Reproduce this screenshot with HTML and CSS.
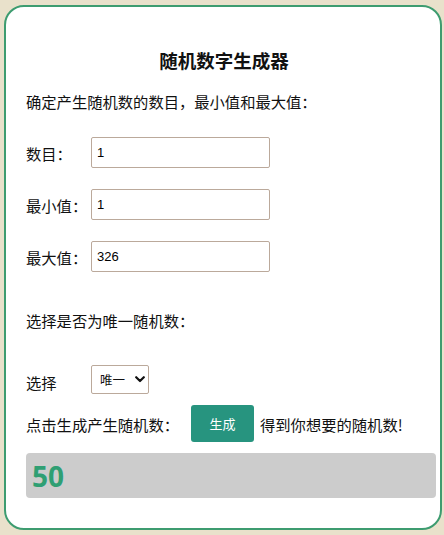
FILE: index.html
```html
<!DOCTYPE html>
<html lang="zh">
<head>
<meta charset="utf-8">
<title>随机数字生成器</title>
<link rel="stylesheet" href="styles.css">
</head>
<body>
<div class="card">
  <h1 class="title">随机数字生成器</h1>
  <p class="intro">确定产生随机数的数目，最小值和最大值：</p>
  <div class="field">
    <label class="label">数目：</label>
    <input class="input" type="text" value="1">
  </div>
  <div class="field">
    <label class="label">最小值：</label>
    <input class="input" type="text" value="1">
  </div>
  <div class="field">
    <label class="label">最大值：</label>
    <input class="input" type="text" value="326">
  </div>
  <p class="question">选择是否为唯一随机数：</p>
  <div class="select-row">
    <label class="label">选择</label>
    <div class="select">
      <span>唯一</span>
      <svg class="chev" width="10" height="7" viewBox="0 0 10 7"><path d="M1.2 1.2 L5 5 L8.8 1.2" fill="none" stroke="#111" stroke-width="2.2" stroke-linecap="round" stroke-linejoin="round"/></svg>
    </div>
  </div>
  <div class="gen-row">
    <span class="gen-text">点击生成产生随机数：</span>
    <button class="btn">生成</button>
    <span class="gen-after">得到你想要的随机数!</span>
  </div>
  <div class="result">50</div>
</div>
</body>
</html>
```
FILE: styles.css
```css
* { box-sizing: border-box; }
html, body { margin: 0; padding: 0; }
body {
  background: #e9e1cb;
  font-family: "Noto Sans CJK SC", "Noto Sans", sans-serif;
  color: #111;
  width: 444px;
  height: 535px;
  overflow: hidden;
}
.card {
  margin: 5px 2px 5px 4px;
  height: 525px;
  background: #fff;
  border: 2px solid #3d9c70;
  border-radius: 20px;
  padding: 41px 4px 0 20px;
}
.title {
  margin: 0;
  font-size: 18.5px;
  line-height: 24px;
  font-weight: 700;
  text-align: center;
  padding-right: 14px;
}
.intro {
  margin: 17px 0 0;
  font-size: 15.3px;
  line-height: 24px;
}
.field {
  display: flex;
  align-items: center;
  height: 31px;
  margin-top: 21px;
}
.intro + .field { margin-top: 24px; }
.label {
  width: 65px;
  flex: none;
  font-size: 15.3px;
  line-height: 24px;
}
.input {
  width: 179px;
  height: 31px;
  border: 1px solid #bba99b;
  border-radius: 2px;
  padding: 0 5px;
  font-family: "Liberation Sans", Arial, sans-serif;
  font-size: 13px;
  color: #000;
  outline: none;
}
.question {
  margin: 36px 0 0;
  font-size: 15.3px;
  line-height: 24px;
}
.select-row {
  display: flex;
  align-items: center;
  margin-top: 33px;
  height: 29px;
}
.select-row .label { padding-top: 5px; }
.select {
  width: 58px;
  height: 29px;
  border: 1px solid #bba99b;
  border-radius: 2px;
  display: flex;
  align-items: center;
  justify-content: space-between;
  padding: 0 3px 0 8px;
  font-size: 12.5px;
}
.chev { display: block; }
.gen-row {
  display: flex;
  align-items: center;
  margin-top: 11px;
  height: 37px;
  font-size: 15.3px;
}
.gen-text { width: 165px; flex: none; }
.btn {
  width: 63px;
  height: 37px;
  border: none;
  border-radius: 3px;
  background: #27947f;
  color: #fff;
  font-family: "Noto Sans CJK SC", sans-serif;
  font-size: 13px;
  padding: 0;
  margin-right: 6px;
}
.gen-after { white-space: nowrap; }
.result {
  margin-top: 11px;
  width: 410px;
  height: 45px;
  background: #cccccc;
  border-radius: 4px;
  padding-left: 6px;
  display: flex;
  align-items: center;
  font-family: "Noto Sans", sans-serif;
  font-weight: 700;
  font-size: 28px;
  color: #2f9f73;
}
```
